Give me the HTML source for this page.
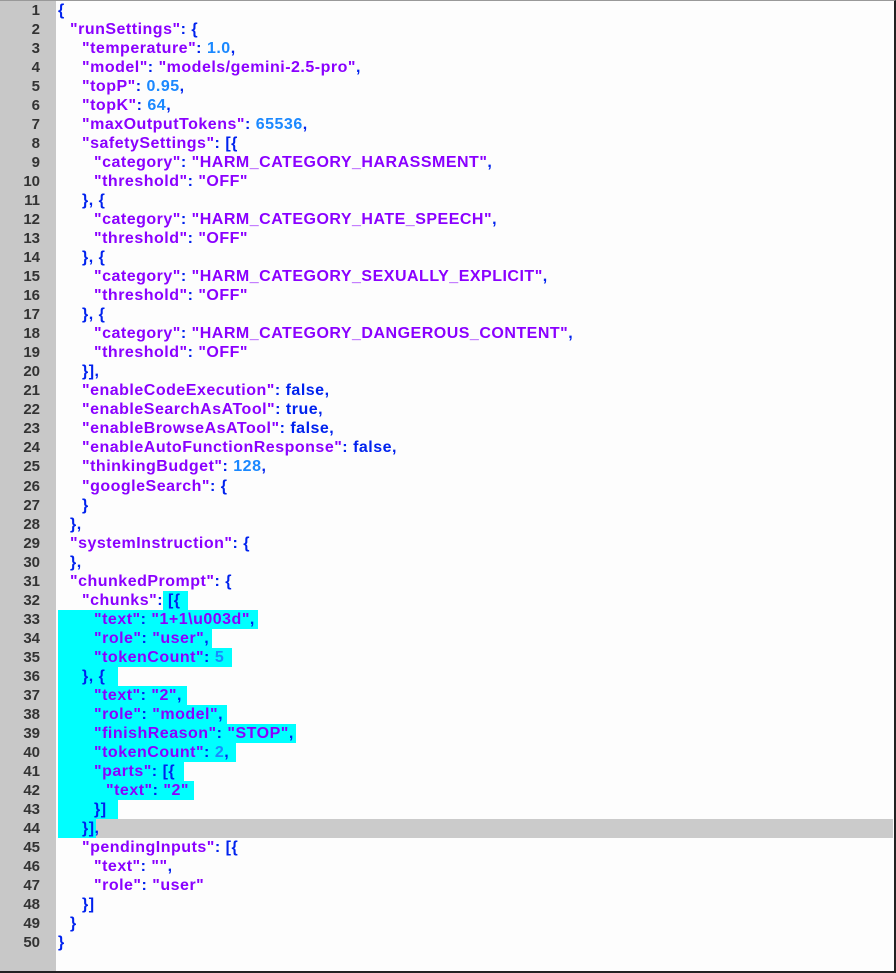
<!DOCTYPE html>
<html><head><meta charset="utf-8"><style>
html,body{margin:0;padding:0;background:#fff}
#ed{position:relative;width:894px;height:970px;border-right:2px solid #222;border-bottom:2px solid #222;border-top:1px solid #999;box-sizing:content-box;overflow:hidden;background:#fdfdfd}
#gut{position:absolute;left:0;top:0;width:56px;height:100%;background:#c8c8c8}
.ln{position:absolute;left:0;width:40px;text-align:right;color:#333;font:bold 15px "Liberation Sans",sans-serif;height:19px;line-height:19px}
.l{position:absolute;left:58px;white-space:pre;font:bold 16px "Liberation Sans",sans-serif;letter-spacing:0.5px;height:19px;line-height:19px;color:#0022ee}
.k{color:#8a00ff}.n{color:#1a88ff}
.hl{position:absolute;background:#00ffff;height:19px}
#cur{position:absolute;left:96px;width:797px;height:19px;background:#cbcbcb}
</style></head><body><div id="ed"><div id="gut"></div>
<div id="cur" style="top:818px"></div>
<div class="hl" style="left:163px;width:25px;top:590px"></div>
<div class="hl" style="left:58px;width:200px;top:609px"></div>
<div class="hl" style="left:58px;width:154px;top:628px"></div>
<div class="hl" style="left:58px;width:174px;top:647px"></div>
<div class="hl" style="left:58px;width:60px;top:666px"></div>
<div class="hl" style="left:58px;width:129px;top:685px"></div>
<div class="hl" style="left:58px;width:169px;top:704px"></div>
<div class="hl" style="left:58px;width:238px;top:723px"></div>
<div class="hl" style="left:58px;width:178px;top:742px"></div>
<div class="hl" style="left:58px;width:126px;top:761px"></div>
<div class="hl" style="left:58px;width:136px;top:780px"></div>
<div class="hl" style="left:58px;width:60px;top:799px"></div>
<div class="hl" style="left:58px;width:38px;top:818px"></div>
<div id="lines"></div>
</div>
<script>
var L=[
'{',
'  <k>"runSettings"</k>: {',
'    <k>"temperature"</k>: <n>1.0</n>,',
'    <k>"model"</k>: <k>"models/gemini-2.5-pro"</k>,',
'    <k>"topP"</k>: <n>0.95</n>,',
'    <k>"topK"</k>: <n>64</n>,',
'    <k>"maxOutputTokens"</k>: <n>65536</n>,',
'    <k>"safetySettings"</k>: [{',
'      <k>"category"</k>: <k>"HARM_CATEGORY_HARASSMENT"</k>,',
'      <k>"threshold"</k>: <k>"OFF"</k>',
'    }, {',
'      <k>"category"</k>: <k>"HARM_CATEGORY_HATE_SPEECH"</k>,',
'      <k>"threshold"</k>: <k>"OFF"</k>',
'    }, {',
'      <k>"category"</k>: <k>"HARM_CATEGORY_SEXUALLY_EXPLICIT"</k>,',
'      <k>"threshold"</k>: <k>"OFF"</k>',
'    }, {',
'      <k>"category"</k>: <k>"HARM_CATEGORY_DANGEROUS_CONTENT"</k>,',
'      <k>"threshold"</k>: <k>"OFF"</k>',
'    }],',
'    <k>"enableCodeExecution"</k>: false,',
'    <k>"enableSearchAsATool"</k>: true,',
'    <k>"enableBrowseAsATool"</k>: false,',
'    <k>"enableAutoFunctionResponse"</k>: false,',
'    <k>"thinkingBudget"</k>: <n>128</n>,',
'    <k>"googleSearch"</k>: {',
'    }',
'  },',
'  <k>"systemInstruction"</k>: {',
'  },',
'  <k>"chunkedPrompt"</k>: {',
'    <k>"chunks"</k>: [{',
'      <k>"text"</k>: <k>"1+1\\u003d"</k>,',
'      <k>"role"</k>: <k>"user"</k>,',
'      <k>"tokenCount"</k>: <n>5</n>',
'    }, {',
'      <k>"text"</k>: <k>"2"</k>,',
'      <k>"role"</k>: <k>"model"</k>,',
'      <k>"finishReason"</k>: <k>"STOP"</k>,',
'      <k>"tokenCount"</k>: <n>2</n>,',
'      <k>"parts"</k>: [{',
'        <k>"text"</k>: <k>"2"</k>',
'      }]',
'    }],',
'    <k>"pendingInputs"</k>: [{',
'      <k>"text"</k>: <k>""</k>,',
'      <k>"role"</k>: <k>"user"</k>',
'    }]',
'  }',
'}'];
var h='';
for(var i=0;i<L.length;i++){
 var t=Math.round(i*19.02);
 var s=L[i].replace(/<k>/g,'<span class="k">').replace(/<n>/g,'<span class="n">').replace(/<\/[kn]>/g,'</span>').replace(/^( +)/,function(m){return '<span style="display:inline-block;width:'+(m.length*6)+'px"></span>';});
 h+='<div class="ln" style="top:'+t+'px">'+(i+1)+'</div><div class="l" style="top:'+t+'px">'+s+'</div>';
}
document.getElementById('lines').innerHTML=h;
</script>
</body></html>
